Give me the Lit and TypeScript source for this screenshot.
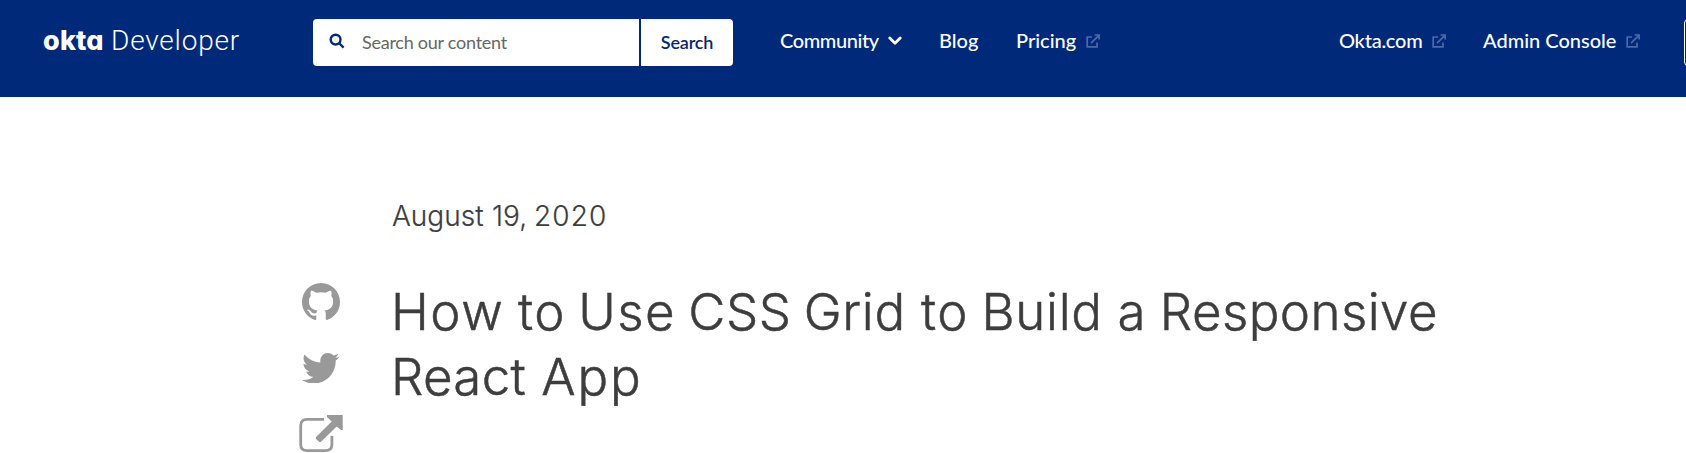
import { LitElement, html, css, svg } from "lit";
import { customElement } from "lit/decorators.js";
import { styleMap } from "lit/directives/style-map.js";

interface Word {
  text: string;
  width: number;
  tracking?: number;
}

const titleLines: Word[][] = [
  [
    { text: "How", width: 127, tracking: 1.6 },
    { text: "to", width: 60.3, tracking: 1.5 },
    { text: "Use", width: 110, tracking: 1.4 },
    { text: "CSS", width: 115.4, tracking: 0.5 },
    { text: "Grid", width: 117.3, tracking: 0.7 },
    { text: "to", width: 60.5, tracking: 1.5 },
    { text: "Build", width: 136, tracking: 0.7 },
    { text: "a", width: 42.3 },
    { text: "Responsive", width: 280, tracking: 0.45 },
  ],
  [
    { text: "React", width: 150.3, tracking: 0.3 },
    { text: "App", width: 105, tracking: 1.8 },
  ],
];

const dateWords: Word[] = [
  { text: "August", width: 100 },
  { text: "19,", width: 42 },
  { text: "2020", width: 75, tracking: 1.1 },
];

const words = (list: Word[]) =>
  list.map(
    (w) => html`<span
      class="word"
      style=${styleMap({ width: `${w.width}px`, letterSpacing: `${w.tracking ?? 0}px` })}
      >${w.text}</span
    > `
  );

const external = html`<svg class="ext" viewBox="0 0 14 14" width="14" height="14">
  ${svg`<path d="M6 3H1.2v9.8H11V8.5M5 9.2L12.4 1.8M8.6 1h4.5v4.5" />`}
</svg>`;

@customElement("site-header")
export class SiteHeader extends LitElement {
  static styles = css`
    :host {
      display: flex;
      align-items: flex-start;
      box-sizing: border-box;
      height: 97px;
      padding: 19px 0 0 43px;
      overflow: hidden;
      background: #00297a;
      color: #fff;
      font-family: Lato, sans-serif;
    }
    .logo {
      display: flex;
      align-items: baseline;
      flex: none;
      width: 270px;
      padding-top: 5px;
      line-height: 33px;
    }
    .brand {
      width: 68px;
      font: 800 27px/33px Inter, sans-serif;
      font-feature-settings: "cv11";
      letter-spacing: 0.2px;
    }
    .product {
      font: 300 28px/33px Roboto, sans-serif;
      letter-spacing: 0.8px;
    }
    .search {
      display: flex;
      flex: none;
      gap: 2px;
      width: 420px;
      height: 47px;
      margin-right: 47px;
    }
    .field {
      display: flex;
      align-items: center;
      box-sizing: border-box;
      width: 326px;
      padding: 0 0 2px 16px;
      background: #fff;
      border-radius: 4px 0 0 4px;
      color: #666;
      font-size: 18px;
      letter-spacing: -0.25px;
    }
    .field svg {
      margin: 0 17px 1px 0;
      fill: none;
      stroke: #00297a;
      stroke-width: 2.4;
    }
    .button {
      display: flex;
      align-items: center;
      justify-content: center;
      flex: 1;
      padding-bottom: 2px;
      background: #fff;
      border-radius: 0 4px 4px 0;
      color: #0b2767;
      font-size: 18px;
      font-weight: 600;
      letter-spacing: -0.2px;
    }
    nav {
      display: grid;
      flex: none;
      padding-top: 9px;
      font-size: 20px;
      font-weight: 500;
      line-height: 24px;
      white-space: nowrap;
    }
    .main {
      grid-template-columns: 159px 77px 323px;
    }
    .side {
      grid-template-columns: 144px 201px;
    }
    a {
      display: flex;
      align-items: center;
    }
    .tight {
      letter-spacing: -0.4px;
    }
    .snug {
      letter-spacing: -0.25px;
    }
    .chev {
      margin: 2px 0 0 9px;
      fill: none;
      stroke: #fff;
      stroke-width: 2.8;
      stroke-linecap: round;
      stroke-linejoin: round;
    }
    .ext {
      margin: 2px 0 0 10px;
      fill: none;
      stroke: #4d69a8;
      stroke-width: 1.7;
    }
    .signup {
      flex: none;
      box-sizing: border-box;
      width: 120px;
      height: 47px;
      border: 1px solid #fff;
      border-radius: 4px;
    }
  `;

  render() {
    return html`
      <div class="logo"><span class="brand">okta</span><span class="product">Developer</span></div>
      <div class="search">
        <div class="field">
          <svg viewBox="0 0 16 16" width="16" height="16">
            <circle cx="6.6" cy="6.6" r="4.9" />
            <path d="M10 10l4.6 4.6" />
          </svg>
          <span>Search our content</span>
        </div>
        <div class="button">Search</div>
      </div>
      <nav class="main">
        <a class="tight">Community
          <svg class="chev" viewBox="0 0 14 10" width="14" height="10"><path d="M1.8 2L7 7.200L12.200 2" /></svg>
        </a>
        <a>Blog</a>
        <a>Pricing ${external}</a>
      </nav>
      <nav class="side">
        <a class="snug">Okta.com ${external}</a>
        <a>Admin Console ${external}</a>
      </nav>
      <div class="signup"></div>
    `;
  }
}

@customElement("app-root")
export class AppRoot extends LitElement {
  static styles = css`
    :host {
      display: block;
      height: 453px;
      overflow: hidden;
      background: #fff;
      color: #3d3d3d;
      font-family: Inter, sans-serif;
    }
    .post {
      display: grid;
      grid-template-columns: 44px 1080px;
      column-gap: 48px;
      padding: 102px 0 0 299px;
    }
    .date {
      display: flex;
      grid-column: 2;
      height: 80px;
      padding-left: 1px;
      font-size: 28px;
      font-weight: 300;
      line-height: 34px;
      -webkit-text-stroke: 0.2px #3d3d3d;
    }
    .word {
      flex: none;
      white-space: nowrap;
    }
    .share {
      display: flex;
      flex-direction: column;
      align-items: center;
      gap: 31.5px;
      padding-top: 4px;
      fill: #999;
    }
    .share svg {
      display: block;
      flex: none;
    }
    .frame {
      fill: none;
      stroke: #999;
      stroke-width: 2.8;
    }
    h1 {
      margin: 0;
      font-size: 51px;
      font-weight: 300;
      line-height: 65px;
      -webkit-text-stroke: 0.5px #3d3d3d;
    }
    .line {
      display: flex;
    }
  `;

  render() {
    return html`
      <site-header></site-header>
      <main class="post">
        <div class="date">${words(dateWords)}</div>
        <div class="share">
          <svg viewBox="0 0 16 16" width="38" height="38">
            <path d="M8 0C3.58 0 0 3.58 0 8c0 3.54 2.29 6.53 5.47 7.59.4.07.55-.17.55-.38 0-.19-.01-.82-.01-1.49-2.01.37-2.53-.49-2.69-.94-.09-.23-.48-.94-.82-1.13-.28-.15-.68-.52-.01-.53.63-.01 1.08.58 1.23.82.72 1.21 1.87.87 2.33.66.07-.52.28-.87.51-1.07-1.78-.2-3.64-.89-3.64-3.95 0-.87.31-1.59.82-2.15-.08-.2-.36-1.02.08-2.12 0 0 .67-.21 2.2.82.64-.18 1.32-.27 2-.27s1.36.09 2 .27c1.53-1.04 2.2-.82 2.2-.82.44 1.1.16 1.92.08 2.12.51.56.82 1.27.82 2.15 0 3.07-1.87 3.75-3.65 3.95.29.25.54.73.54 1.48 0 1.07-.01 1.93-.01 2.2 0 .21.15.46.55.38A8.01 8.01 0 0 0 16 8c0-4.42-3.58-8-8-8z" />
          </svg>
          <svg viewBox="0 48 512 416" width="37.5" height="30.5">
            <path d="M459.37 151.716c.325 4.548.325 9.097.325 13.645 0 138.72-105.583 298.558-298.558 298.558-59.452 0-114.68-17.219-161.137-47.106 8.447.974 16.568 1.299 25.34 1.299 49.055 0 94.213-16.568 130.274-44.832-46.132-.975-84.792-31.188-98.112-72.772 6.498.974 12.995 1.624 19.818 1.624 9.421 0 18.843-1.3 27.614-3.573-48.081-9.747-84.143-51.98-84.143-102.985v-1.299c13.969 7.797 30.214 12.67 47.431 13.319-28.264-18.843-46.781-51.005-46.781-87.391 0-19.492 5.197-37.36 14.294-52.954 51.655 63.675 129.3 105.258 216.365 109.807-1.624-7.797-2.599-15.918-2.599-24.04 0-57.828 46.782-104.934 104.934-104.934 30.213 0 57.502 12.67 76.67 33.137 23.715-4.548 46.456-13.32 66.599-25.34-7.798 24.366-24.366 44.833-46.132 57.827 21.117-2.273 41.584-8.122 60.426-16.243-14.292 20.791-32.161 39.308-52.628 54.253z" />
          </svg>
          <svg viewBox="0 0 44 38" width="44" height="38">
            <path class="frame" d="M25 4.4H8Q1.700 4.400 1.700 10.500V29.500Q1.700 35.700 8 35.700H26.500Q32.900 35.700 32.900 29.500V21" />
            <path d="M28 0H43.700V15H42L37.700 11.400L21.700 27.100L20.300 27.100L16.800 23.800V22.300L32.700 6.600L28 2Z" />
          </svg>
        </div>
        <h1>${titleLines.map((line) => html`<div class="line">${words(line)}</div>`)}</h1>
      </main>
    `;
  }
}
